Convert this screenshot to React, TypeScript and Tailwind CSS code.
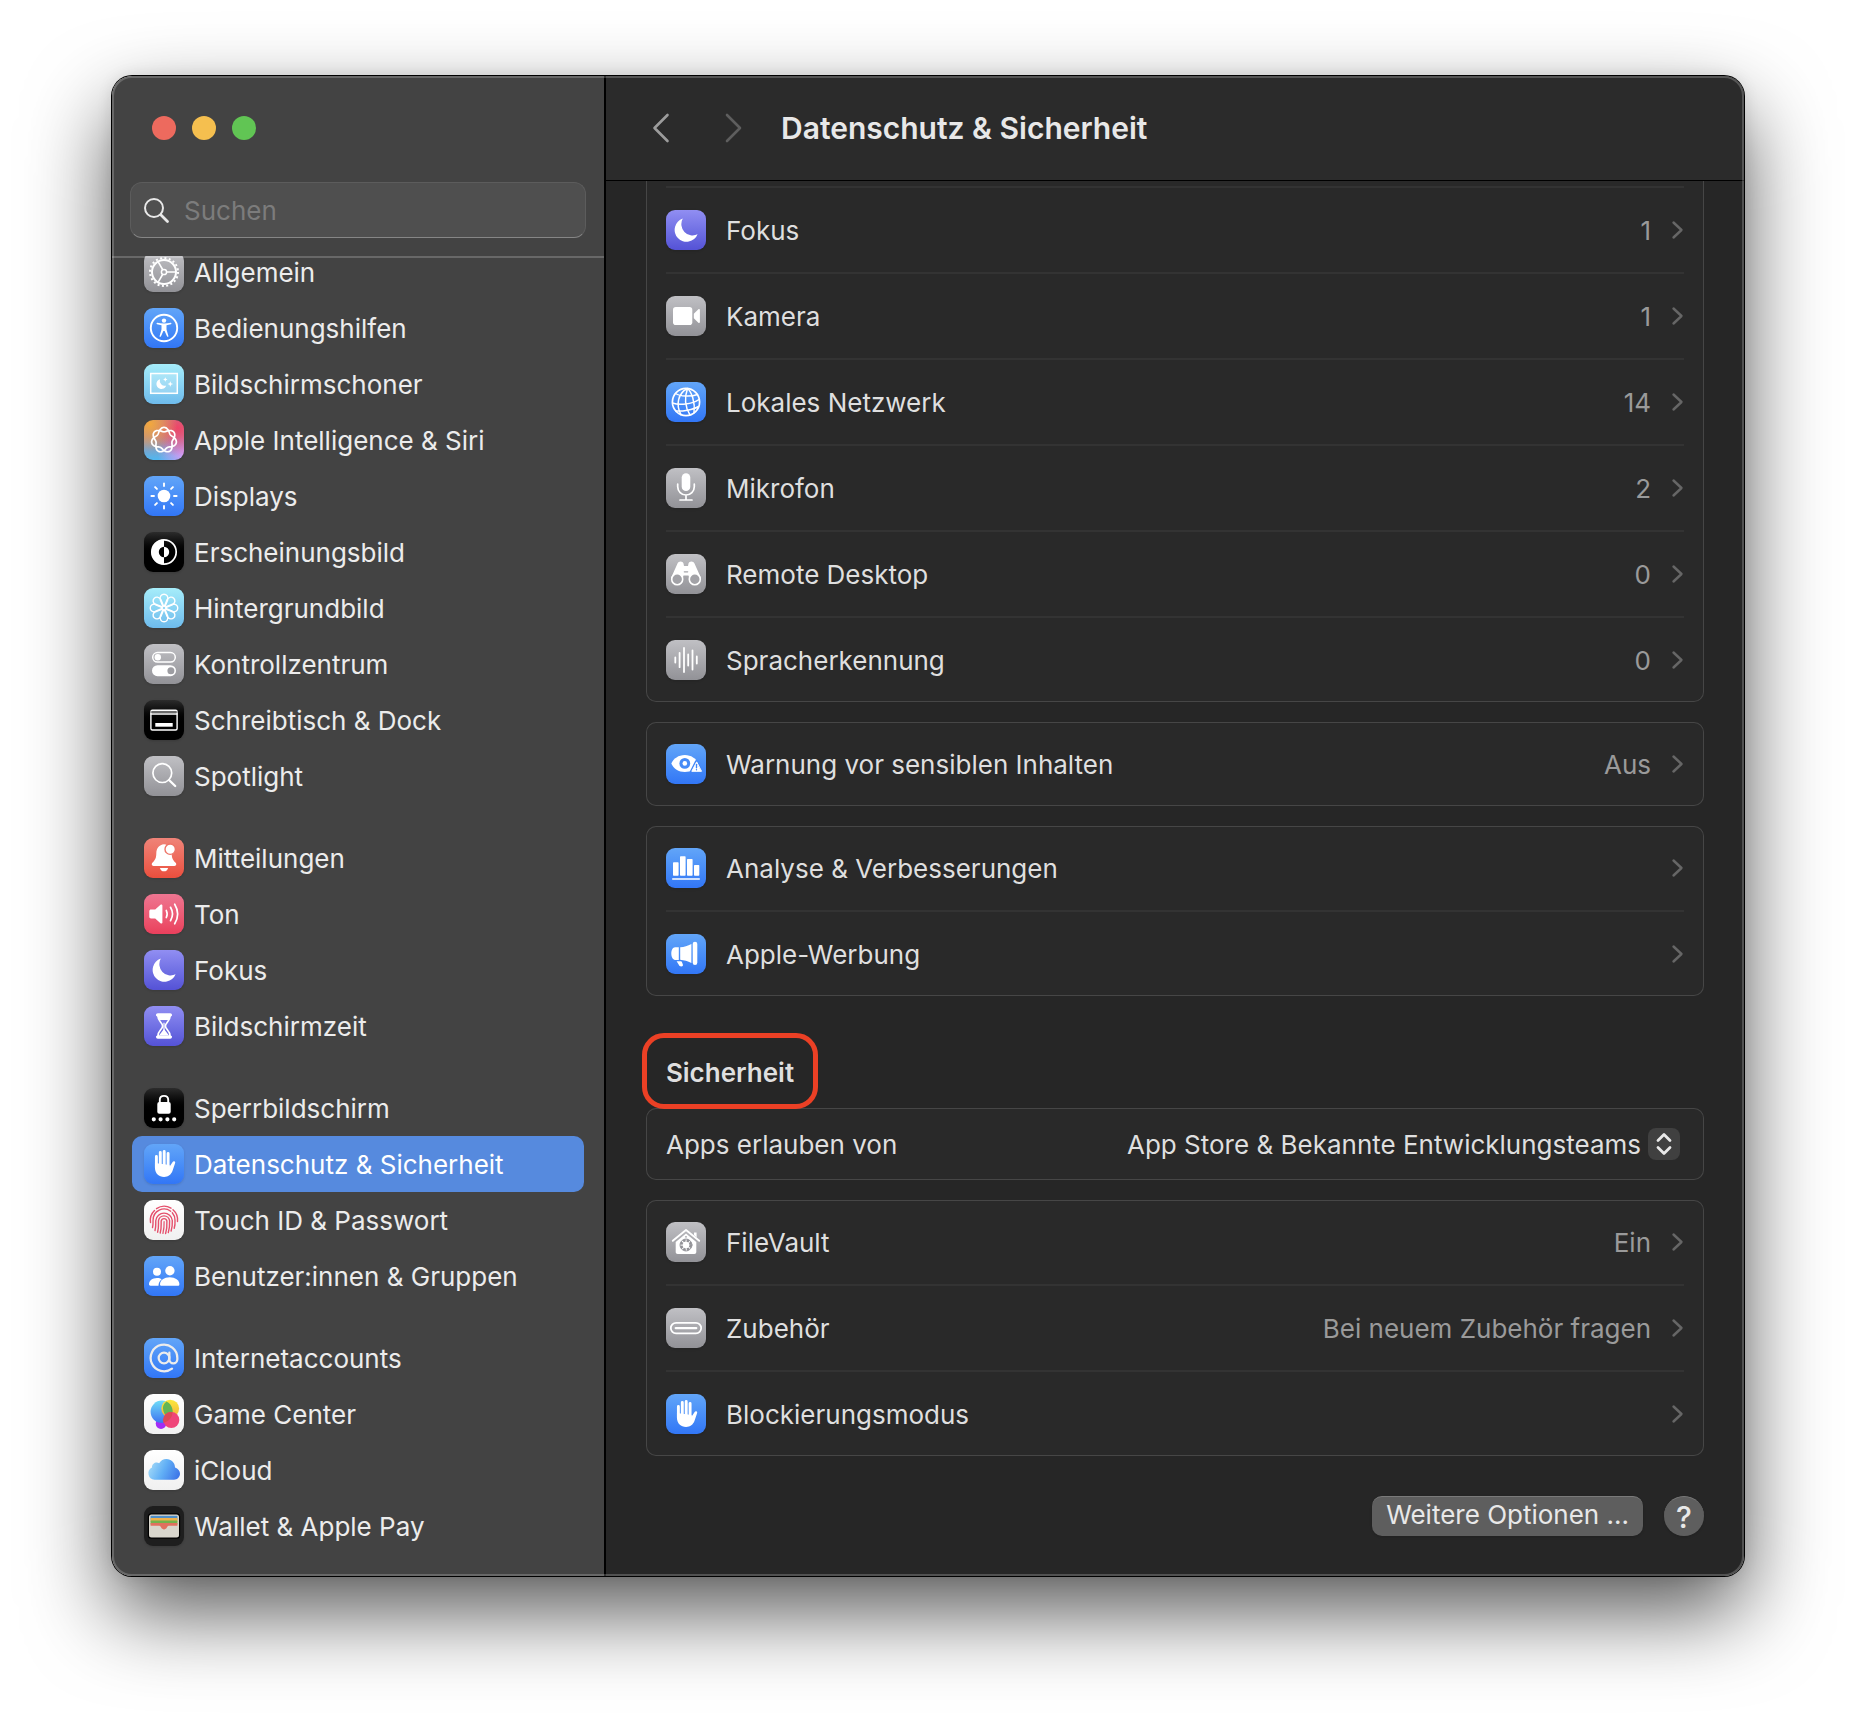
import React, { useState } from 'react';
import { AtSign } from 'lucide-react';

type Tone = 'gray' | 'blue' | 'cyan' | 'siri' | 'black' | 'red' | 'pink' | 'purple' | 'white' | 'wallet';

interface IEntry {
    label: string;
    tone: Tone;
    icon: React.ReactNode;
    value?: string;
}

const tones: Record<Tone, string> = {
    gray: 'bg-linear-to-b from-[#c0c0c4] to-[#929297]',
    blue: 'bg-linear-to-b from-[#62a5f8] to-[#3276f6]',
    cyan: 'bg-linear-to-b from-[#a6edfa] to-[#6ebbec]',
    siri: 'bg-[radial-gradient(circle_at_15%_10%,#f3a73c_0%,transparent_55%),radial-gradient(circle_at_85%_20%,#ef4468_0%,transparent_60%),radial-gradient(circle_at_100%_85%,#d79bf7_0%,transparent_50%),linear-gradient(#b08a9a_40%,#4fb8f2)]',
    black: 'bg-linear-to-b from-[#2c2c2c] to-black to-60%',
    red: 'bg-linear-to-b from-[#ef8378] to-[#eb4e3d]',
    pink: 'bg-linear-to-b from-[#ee7591] to-[#ea3f5c]',
    purple: 'bg-linear-to-b from-[#918ef2] to-[#5552d6]',
    white: 'bg-linear-to-b from-white to-[#f0f0f0]',
    wallet: 'bg-[#1e1e1e]',
};

// Closed seven-lobed knot, two turns around the centre
const knot = Array.from({ length: 169 }, (_, i) => {
    const a = (i / 168) * Math.PI * 4;
    const r = 10.4 + 2.2 * Math.cos(3.5 * a);
    return `${i ? 'L' : 'M'}${(20 + r * Math.sin(a)).toFixed(2)} ${(20 - r * Math.cos(a)).toFixed(2)}`;
}).join('');

const eighths = [0, 45, 90, 135, 180, 225, 270, 315];

const moon = <path d="M16.800 8.600A11.900 11.900 0 1 0 31.600 24.300A11.300 11.300 0 0 1 16.800 8.600z" fill="#fff" stroke="none" />;

const hand = (
    <>
        <path d="M12.400 12.500V24M16.300 8.500V22M20.200 7.500V22M24.100 9.500V24" strokeWidth="2.900" />
        <path
            d="M10.950 19V23.500c0 6 4 9.500 9.100 9.500c4.200 0 7-2.300 8.500-6.200l2.600-7.800c.5-1.600-1.700-2.400-2.500-1l-3 4.500V21z"
            fill="#fff"
            stroke="none"
        />
    </>
);

const gear = (
    <>
        <circle cx="20" cy="20" r="14" strokeWidth="2" strokeDasharray="2 2.400" strokeLinecap="butt" />
        <circle cx="20" cy="20" r="12" strokeWidth="2" />
        <circle cx="20" cy="20" r="2.600" strokeWidth="1.500" />
        <path d="M22.800 20H31.500M18.600 17.500L14.200 9.900M18.600 22.500L14.200 30.100" strokeWidth="1.600" />
    </>
);

const accessibility = (
    <>
        <circle cx="20" cy="20" r="13.200" strokeWidth="1.900" />
        <circle cx="20" cy="12.600" r="2.200" fill="#fff" stroke="none" />
        <path
            d="M13.200 14.800c-.8 0-.9 1.300-.1 1.500l4.400.9v4.300l-1.900 6.400c-.2 1 1 1.300 1.400.4L19.400 23h1.200l2.400 5.300c.4.9 1.600.6 1.400-.4l-1.900-6.400v-4.300l4.400-.9c.8-.2.7-1.500-.1-1.500-2.300.4-4.500.8-6.800.8s-4.500-.4-6.800-.8z"
            fill="#fff"
            stroke="none"
        />
    </>
);

const screensaver = (
    <>
        <rect x="6.700" y="9.500" width="26.600" height="19.800" strokeWidth="1.500" fill="#fff" fillOpacity=".2" strokeLinejoin="miter" />
        <path d="M16 15.200A5 5 0 1 0 22.200 21.500A5 5 0 0 1 16 15.200z" fill="#fff" stroke="none" />
        <path
            d="M21.300 13.300l.7 1.500 1.500.7-1.500.7-.7 1.500-.7-1.500-1.500-.7 1.500-.7zM26.300 17.200l.8 2 2 .8-2 .8-.8 2-.8-2-2-.8 2-.8z"
            fill="#fff"
            stroke="none"
        />
    </>
);

const sun = (
    <>
        <circle cx="20" cy="20" r="6.300" fill="#fff" stroke="none" />
        {eighths.map((deg) => (
            <path key={deg} d="M20 10V7.400" transform={`rotate(${deg} 20 20)`} strokeWidth="1.900" />
        ))}
    </>
);

const appearance = (
    <>
        <circle cx="20" cy="20" r="12.200" strokeWidth="1.700" />
        <path d="M20 7.500A12.500 12.500 0 0 0 20 32.500V25.200A5.200 5.200 0 0 1 20 14.800z" fill="#fff" stroke="none" />
        <path d="M20 14.800A5.200 5.200 0 0 1 20 25.200z" fill="#fff" stroke="none" />
    </>
);

const flower = (
    <>
        {eighths.map((deg) => (
            <path
                key={deg}
                d="M19 18.500L16.300 12C14.500 4.300 25.500 4.300 23.700 12L21 18.500"
                transform={`rotate(${deg} 20 20)`}
                strokeWidth="1.400"
            />
        ))}
    </>
);

const toggles = (
    <>
        <rect x="8.700" y="8.500" width="22.600" height="9.600" rx="4.800" strokeWidth="1.500" />
        <circle cx="13.800" cy="13.300" r="3.200" fill="#fff" stroke="none" />
        <rect x="8" y="21.200" width="24" height="11" rx="5.500" fill="#fff" stroke="none" />
        <circle cx="26.900" cy="26.700" r="3.500" fill="#9d9da2" stroke="none" />
    </>
);

const dock = (
    <>
        <rect x="6.900" y="10.200" width="26.200" height="19.800" rx="1.500" strokeWidth="1.400" />
        <path d="M7 12h26" stroke="#8a8a8a" strokeWidth="1.600" />
        <path d="M7 14h26" strokeWidth="1.300" />
        <rect x="11.300" y="23" width="17.400" height="3.700" fill="#fff" stroke="none" />
    </>
);

const magnifier = (
    <>
        <circle cx="18.300" cy="17.100" r="9.400" strokeWidth="1.700" />
        <path d="M25 24l6.200 6" strokeWidth="2.300" />
    </>
);

const bell = (
    <>
        <path
            d="M20 6.300c-4.800.5-7.600 4-7.700 9-.1 4-.6 6.300-3.700 9.200-1.400 1.300-1.100 3.400.9 3.400h21c2 0 2.300-2.100.9-3.400-3.100-2.900-3.600-5.200-3.700-9.200-.1-5-2.900-8.500-7.700-9z"
            fill="#fff"
            stroke="none"
        />
        <path d="M15.900 29.900h8.200c-.4 2-2 3.400-4.100 3.400s-3.700-1.400-4.100-3.400z" fill="#fff" stroke="none" />
        <circle cx="26.200" cy="11.200" r="5.200" fill="#fff" stroke="#ed7467" strokeWidth="1.400" />
    </>
);

const speaker = (
    <>
        <path d="M7 15.500h4.200l5.300-4.700c.8-.7 1.900-.2 1.900.8v16.800c0 1-1.100 1.500-1.900.8l-5.300-4.700H7c-1 0-1.700-.7-1.700-1.700v-5.600c0-1 .7-1.700 1.700-1.700z" fill="#fff" stroke="none" />
        <path d="M22.300 16.500a8 8 0 0 1 0 7M26.500 13.300a13 13 0 0 1 0 13.400M30.700 10.200a19 19 0 0 1 0 19.600" strokeWidth="1.700" />
    </>
);

const hourglass = (
    <>
        <path d="M12 9.200c0-1.200.7-1.900 1.800-1.900h12.400c1.100 0 1.800.7 1.800 1.900 0 .6-.3 1-.8 1H12.800c-.5 0-.8-.4-.8-1zM12 30.800c0 1.200.7 1.900 1.800 1.900h12.400c1.100 0 1.800-.7 1.800-1.900 0-.6-.3-1-.8-1H12.800c-.5 0-.8.4-.8 1z" fill="#fff" stroke="none" />
        <path d="M13.900 10c0 5.500 4.700 6.500 4.700 10s-4.700 4.500-4.700 10h12.200c0-5.500-4.700-6.500-4.700-10s4.700-4.500 4.700-10z" strokeWidth="1.700" />
        <path d="M14 10h12c0 1.500-.5 2.800-1.300 4h-9.400c-.8-1.200-1.300-2.500-1.300-4zM20 23l4.600 6h-9.200z" fill="#fff" stroke="none" />
        <path d="M20 17v8" strokeWidth="1.200" />
    </>
);

const lock = (
    <>
        <rect x="13.300" y="14" width="13.400" height="11.700" rx="2" fill="#fff" stroke="none" />
        <path d="M15.800 15v-3.200c0-5.300 8.400-5.300 8.400 0V15" strokeWidth="1.900" />
        <path d="M9.800 31.300h0M16.600 31.300h0M23.400 31.300h0M30.200 31.300h0" strokeWidth="4.200" />
    </>
);

const fingerprint = (
    <g stroke="#e5506c" strokeWidth="1.400">
        <path d="M6.500 22.500A13.500 13.500 0 0 1 10.500 10.500M12.500 8.700A13.600 13.600 0 0 1 27 8.200M29 9.800A13.600 13.600 0 0 1 33.500 21.500" />
        <path d="M8.500 27.500c.8-3 .4-5 .6-7.500a11 11 0 0 1 17.600-8.800M28.300 12.800a11 11 0 0 1 2.700 7.500c.2 3 0 5.500-.8 8" />
        <path d="M11 30.500c1.200-4 .6-7 .8-10a8.300 8.300 0 0 1 16.500 0c.2 4-.1 7-1.200 10.500" />
        <path d="M13.600 32.200c1.400-4.700.7-8 .9-11.500a5.600 5.600 0 0 1 11.100 0c.2 4.500-.1 8-1.300 11.800" />
        <path d="M16.200 33c1.500-5 .8-8.500 1-12a2.900 2.900 0 0 1 5.700 0c.2 4.500-.1 8.500-1.300 12.500" />
        <path d="M20.100 21.500c.2 4.500-.2 8-1.200 12" strokeWidth="1.200" />
    </g>
);

const people = (
    <>
        <circle cx="13" cy="15.700" r="4" fill="#fff" stroke="none" />
        <path d="M5 28.300c0-3.500 3.300-6.300 8-6.300 2 0 3.500.5 4.700 1.200-1.900 1.500-3.200 3.500-3.200 6.500H6.500c-1 0-1.500-.5-1.500-1.400z" fill="#fff" stroke="none" />
        <circle cx="25.900" cy="14.700" r="4.700" fill="#fff" stroke="none" />
        <path d="M16 28.200c0-3.700 4.200-6.900 9.700-6.900s9.700 3.200 9.700 6.900c0 1-.6 1.500-1.700 1.500h-16c-1.100 0-1.700-.5-1.700-1.500z" fill="#fff" stroke="none" />
    </>
);

const gameCenter = (
    <>
        <defs>
            <linearGradient id="gc-blue" x1="0" y1="0" x2="0" y2="1">
                <stop offset="0" stopColor="#6fdcf8" />
                <stop offset="1" stopColor="#3f74f0" />
            </linearGradient>
            <linearGradient id="gc-yellow" x1="0" y1="0" x2="0" y2="1">
                <stop offset="0" stopColor="#fbe93c" />
                <stop offset="1" stopColor="#f2b13a" />
            </linearGradient>
        </defs>
        <g stroke="none">
            <circle cx="17" cy="29.600" r="5.300" fill="#a32cf5" />
            <circle cx="17.800" cy="17.800" r="11.200" fill="url(#gc-blue)" />
            <circle cx="26.200" cy="14.600" r="8.900" fill="url(#gc-yellow)" />
            <path d="M22.500 7.600A11.200 11.200 0 0 1 27 23.500A8.900 8.900 0 0 1 22.500 7.600z" fill="#62b556" />
            <circle cx="27.300" cy="26" r="8" fill="#ef4579" />
            <path d="M20 22.500A8 8 0 0 1 28.600 18.100A11.200 11.200 0 0 1 19.600 28.900A8 8 0 0 1 20 22.500z" fill="#dc4a55" />
        </g>
    </>
);

const cloud = (
    <>
        <defs>
            <linearGradient id="cloud" x1="0" y1=".3" x2="1" y2=".6">
                <stop offset="0" stopColor="#a5dbf7" />
                <stop offset=".5" stopColor="#62b0f6" />
                <stop offset="1" stopColor="#3f78e8" />
            </linearGradient>
        </defs>
        <path
            d="M10.500 29.700A6.500 6.500 0 0 1 8 17.400C7.700 13.700 12.300 11.200 15.100 13.300C16.800 10.500 19.300 9 22.300 9C27.300 9 31 12.700 31 17.400C34 18.300 36 20.800 36 23.800C36 27.200 33.300 29.700 30 29.700z"
            fill="url(#cloud)"
            stroke="none"
        />
    </>
);

const wallet = (
    <g stroke="none">
        <rect x="3.800" y="7.200" width="32.400" height="25.600" rx="3.500" fill="#000" />
        <rect x="5" y="8.400" width="30" height="23.200" rx="2.500" fill="#d9d6cd" />
        <rect x="6.600" y="9.800" width="26.800" height="4" fill="#4f8fc8" />
        <rect x="6.600" y="12" width="26.800" height="4" fill="#efb04a" />
        <rect x="6.600" y="14.500" width="26.800" height="4" fill="#72b24c" />
        <path d="M6.600 17h26.800v2.800h-8.200c-1.200 0-1.700.5-2.200 1.500-1.200 2.800-4.800 2.800-6 0-.5-1-1-1.500-2.200-1.500H6.600z" fill="#e0705f" />
    </g>
);

const camera = (
    <g fill="#fff" stroke="none">
        <rect x="7" y="11" width="19.300" height="18" rx="2.800" />
        <path d="M27.800 17.800l4.600-4.500c.6-.6 1.500-.3 1.500.6v12.200c0 .9-.9 1.200-1.500.6l-4.600-4.500z" />
    </g>
);

const globe = (
    <g strokeWidth="1.500">
        <circle cx="20" cy="20" r="13.600" strokeWidth="1.700" />
        <path d="M21.500 6.500C12 11 9.500 23 15 32.600M21.500 6.500C18.500 15 19 25 24 33M21.500 6.500C25.500 10 29.500 20 28 31" />
        <path d="M9.500 11.500C14 14.500 25 15 31.500 12.500M6.500 21C13 23.500 26 22.500 33 17.500M10 29C16 29.500 27 28 32.500 24.500" />
    </g>
);

const microphone = (
    <>
        <rect x="15.700" y="5.300" width="8.600" height="17.700" rx="4.300" fill="#fff" stroke="none" />
        <path d="M11.700 16v2.700a8.300 8.300 0 0 0 16.600 0V16M20 27.500V31.500M14 32h12" strokeWidth="1.700" />
    </>
);

const binoculars = (
    <>
        <path
            d="M11.500 9.500c.8-2.800 5.500-2.800 6 0l.5 2.500h4l.5-2.500c.5-2.800 5.200-2.800 6 0L35 24l-11.500 1-1-3.500h-5l-1 3.500L5 24z"
            fill="#fff"
            stroke="none"
        />
        <path d="M18.300 17.800h3.400" stroke="#a5a5aa" strokeWidth="1.200" />
        <circle cx="11.200" cy="25.300" r="5.500" fill="#a2a2a7" strokeWidth="1.600" />
        <circle cx="28.800" cy="25.300" r="5.500" fill="#a2a2a7" strokeWidth="1.600" />
    </>
);

const waveform = <path d="M9.300 17.500v5M13.600 12.800v14.400M18 8v24M22.200 14.500v11M26.500 10.500v19M30.800 16.500v7" strokeWidth="1.800" />;

const eyeWarning = (
    <>
        <path d="M5.300 19.500C7.500 14.500 12.500 11 18.800 11s11.300 3.500 13.500 8.500C30 24.500 25 28 18.800 28S7.500 24.500 5.300 19.500z" fill="#fff" stroke="none" />
        <circle cx="18.800" cy="19.400" r="5.400" fill="#458bf7" stroke="none" />
        <circle cx="18.800" cy="19.400" r="2.300" fill="#fff" stroke="none" />
        <path d="M30.500 17.500L25.500 27.500H35.500z" fill="#fff" stroke="#4085f7" strokeWidth="3" />
        <path d="M30.500 18.200L25.800 27.300H35.200z" fill="#fff" strokeWidth="1" />
        <path d="M30.500 20.500v3.200M30.500 25.700h0" stroke="#4085f7" strokeWidth="1.400" />
    </>
);

const chart = (
    <g fill="#fff" stroke="none">
        <rect x="7" y="14.300" width="5.600" height="13.400" rx=".7" />
        <rect x="14" y="8.300" width="5.600" height="19.400" rx=".7" />
        <rect x="21" y="11" width="5.600" height="16.700" rx=".7" />
        <rect x="28" y="17" width="5.300" height="10.700" rx=".7" />
        <rect x="6" y="30.200" width="28" height="1.500" rx=".7" />
    </g>
);

const megaphone = (
    <g fill="#fff" stroke="none">
        <path d="M12.800 13.300v12.600H9c-2.100 0-3.700-2.800-3.700-6.300s1.600-6.300 3.700-6.300z" />
        <path d="M14.200 13.300c4-.3 7.500-1.400 11.200-3.300v19c-3.700-1.900-7.200-3-11.200-3.300z" />
        <rect x="26.700" y="7.700" width="4.600" height="23.300" rx="2.300" />
        <path d="M10.600 27.300h4.300c.5 0 .8.200 1 .7l.9 2.200c.5 1.300-.3 2.300-1.600 2.300-1.200 0-2-.6-2.400-1.700z" />
    </g>
);

const vault = (
    <>
        <path d="M28 10.500h2.600v5L28 13z" fill="#fff" stroke="none" />
        <path d="M6.800 18.800L20 8l13.200 10.800" strokeWidth="1.900" />
        <path d="M20 11.500l10.300 8.500v10c0 1.300-.8 2-2 2H11.700c-1.200 0-2-.7-2-2V20z" fill="#fff" stroke="none" />
        <circle cx="20" cy="23" r="4.700" stroke="#929297" strokeWidth="2.600" strokeDasharray="2.700 1" strokeLinecap="butt" />
        <circle cx="20" cy="23" r="6" stroke="#929297" strokeWidth=".9" />
        <path d="M20 14.800h0" stroke="#a5a5aa" strokeWidth="1.800" />
    </>
);

const port = (
    <>
        <rect x="4.800" y="14.800" width="30.400" height="10.600" rx="5.300" strokeWidth="1.800" />
        <path d="M9.800 20.100h20.400" strokeWidth="2.400" />
    </>
);

const sidebarGroups: IEntry[][] = [
    [
        { label: 'Allgemein', tone: 'gray', icon: gear },
        { label: 'Bedienungshilfen', tone: 'blue', icon: accessibility },
        { label: 'Bildschirmschoner', tone: 'cyan', icon: screensaver },
        { label: 'Apple Intelligence & Siri', tone: 'siri', icon: <path d={knot} strokeWidth="1.700" /> },
        { label: 'Displays', tone: 'blue', icon: sun },
        { label: 'Erscheinungsbild', tone: 'black', icon: appearance },
        { label: 'Hintergrundbild', tone: 'cyan', icon: flower },
        { label: 'Kontrollzentrum', tone: 'gray', icon: toggles },
        { label: 'Schreibtisch & Dock', tone: 'black', icon: dock },
        { label: 'Spotlight', tone: 'gray', icon: magnifier },
    ],
    [
        { label: 'Mitteilungen', tone: 'red', icon: bell },
        { label: 'Ton', tone: 'pink', icon: speaker },
        { label: 'Fokus', tone: 'purple', icon: moon },
        { label: 'Bildschirmzeit', tone: 'purple', icon: hourglass },
    ],
    [
        { label: 'Sperrbildschirm', tone: 'black', icon: lock },
        { label: 'Datenschutz & Sicherheit', tone: 'blue', icon: hand },
        { label: 'Touch ID & Passwort', tone: 'white', icon: fingerprint },
        { label: 'Benutzer:innen & Gruppen', tone: 'blue', icon: people },
    ],
    [
        { label: 'Internetaccounts', tone: 'blue', icon: <AtSign x={4} y={4} width={32} height={32} strokeWidth={1.7} /> },
        { label: 'Game Center', tone: 'white', icon: gameCenter },
        { label: 'iCloud', tone: 'white', icon: cloud },
        { label: 'Wallet & Apple Pay', tone: 'wallet', icon: wallet },
    ],
];

const permissions: IEntry[] = [
    { label: 'Fokus', tone: 'purple', icon: moon, value: '1' },
    { label: 'Kamera', tone: 'gray', icon: camera, value: '1' },
    { label: 'Lokales Netzwerk', tone: 'blue', icon: globe, value: '14' },
    { label: 'Mikrofon', tone: 'gray', icon: microphone, value: '2' },
    { label: 'Remote Desktop', tone: 'gray', icon: binoculars, value: '0' },
    { label: 'Spracherkennung', tone: 'gray', icon: waveform, value: '0' },
];

const warnings: IEntry[] = [{ label: 'Warnung vor sensiblen Inhalten', tone: 'blue', icon: eyeWarning, value: 'Aus' }];

const analytics: IEntry[] = [
    { label: 'Analyse & Verbesserungen', tone: 'blue', icon: chart },
    { label: 'Apple-Werbung', tone: 'blue', icon: megaphone },
];

const security: IEntry[] = [
    { label: 'FileVault', tone: 'gray', icon: vault, value: 'Ein' },
    { label: 'Zubehör', tone: 'gray', icon: port, value: 'Bei neuem Zubehör fragen' },
    { label: 'Blockierungsmodus', tone: 'blue', icon: hand },
];

const AppIcon = ({ tone, children }: { tone: Tone; children: React.ReactNode }) => (
    <span className={`size-10 shrink-0 overflow-hidden rounded-[9px] shadow-sm ${tones[tone]}`}>
        <svg viewBox="0 0 40 40" className="size-10" fill="none" stroke="#fff" strokeLinecap="round" strokeLinejoin="round" aria-hidden="true">
            {children}
        </svg>
    </span>
);

const Rows = ({ entries, className }: { entries: IEntry[]; className: string }) => (
    <ul className={`px-5 ${className}`}>
        {entries.map((entry, i) => (
            <li key={entry.label} className={i > 0 ? 'border-t-2 border-[#333]' : ''}>
                <button type="button" className="flex h-21 w-full items-center gap-5 text-left">
                    <AppIcon tone={entry.tone}>{entry.icon}</AppIcon>
                    <span className="flex-1 pt-0.5">{entry.label}</span>
                    <span className="pt-0.5 text-[#9a9a9a]">{entry.value}</span>
                    <svg viewBox="0 0 13 20" className="h-5 w-[13px]" fill="none" stroke="#666" strokeWidth="2.400" strokeLinecap="round" strokeLinejoin="round" aria-hidden="true">
                        <path d="M2.500 2.500l8 7.500-8 7.500" />
                    </svg>
                </button>
            </li>
        ))}
    </ul>
);

const Sidebar = () => {
    const [selected, setSelected] = useState('Datenschutz & Sicherheit');
    const [query, setQuery] = useState('');

    return (
        <aside className="w-[494px] shrink-0 border-r-2 border-black bg-[#434343] text-[#ececec]">
            <div className="flex gap-4 pt-10 pl-10">
                <button type="button" aria-label="Schließen" className="size-6 rounded-full bg-[#ed6a5e]" />
                <button type="button" aria-label="Minimieren" className="size-6 rounded-full bg-[#f5bf4f]" />
                <button type="button" aria-label="Vergrößern" className="size-6 rounded-full bg-[#61c554]" />
            </div>
            <label className="mx-[18px] mt-[42px] mb-[18px] flex h-14 items-center gap-3 rounded-xl border border-[#5c5c5c] border-b-[#868686] bg-[#4f4f4f] px-[13px]">
                <svg viewBox="0 0 28 28" className="size-7 shrink-0" fill="none" stroke="#e8e8e8" strokeLinecap="round" aria-hidden="true">
                    <circle cx="10" cy="12" r="9" strokeWidth="2" />
                    <path d="M17 19l6.500 6.500" strokeWidth="2.800" />
                </svg>
                <input
                    type="text"
                    aria-label="Suchen"
                    placeholder="Suchen"
                    value={query}
                    onChange={(e) => setQuery(e.target.value)}
                    className="w-full bg-transparent pt-0.5 outline-none placeholder:text-[#7c7c7c]"
                />
            </label>
            <nav className="relative overflow-hidden pb-[22px]">
                <div className="absolute inset-x-0 top-0 z-10 h-0.5 bg-white/20" />
                <div className="-mt-3 flex flex-col gap-[26px] px-5">
                    {sidebarGroups.map((group) => (
                        <ul key={group[0].label}>
                            {group.map((entry) => (
                                <li key={entry.label}>
                                    <a
                                        href="#"
                                        onClick={() => setSelected(entry.label)}
                                        className={`flex h-14 items-center gap-[10px] rounded-[10px] px-3 ${
                                            entry.label === selected ? 'bg-[#568ade] text-white' : ''
                                        }`}
                                    >
                                        <AppIcon tone={entry.tone}>{entry.icon}</AppIcon>
                                        <span className="pt-0.5">{entry.label}</span>
                                    </a>
                                </li>
                            ))}
                        </ul>
                    ))}
                </div>
            </nav>
        </aside>
    );
};

const App = () => {
    const [source, setSource] = useState('known');

    return (
        <div className="min-h-screen bg-white px-28 pt-[76px] pb-[148px] font-['Inter',sans-serif] text-[26px] leading-8">
            <div className="relative flex overflow-hidden rounded-[20px] shadow-[0_0_0_1px_#000,0_0_16px_rgba(0,0,0,0.1),0_36px_84px_rgba(0,0,0,0.66)]">
                <Sidebar />
                <main className="min-w-0 flex-1 bg-[#262626] text-[#dfdfdf]">
                    <header className="flex h-[105px] items-center border-b border-black bg-[#2b2b2b] pl-[19px]">
                        <button type="button" aria-label="Zurück" className="flex h-14 w-18 items-center justify-center">
                            <svg viewBox="0 0 18 30" className="h-[30px] w-[18px]" fill="none" stroke="#9c9c9c" strokeWidth="2.600" strokeLinecap="round" strokeLinejoin="round">
                                <path d="M15.500 2L2.500 15l13 13" />
                            </svg>
                        </button>
                        <button type="button" aria-label="Vorwärts" className="flex h-14 w-18 items-center justify-center">
                            <svg viewBox="0 0 18 30" className="h-[30px] w-[18px]" fill="none" stroke="#5e5e5e" strokeWidth="2.600" strokeLinecap="round" strokeLinejoin="round">
                                <path d="M3 2l13 13-13 13" />
                            </svg>
                        </button>
                        <h1 className="ml-3 text-[30px] font-semibold text-[#e8e8e8]">Datenschutz & Sicherheit</h1>
                    </header>

                    <div className="flex flex-col px-10 pb-10">
                        <div className="rounded-b-[10px] border border-t-0 border-[#464646] bg-[#292929] pt-[5px]">
                            <div className="mx-[19px] h-0.5 bg-[#333]" />
                            <Rows entries={permissions} className="-mx-px -mb-px" />
                        </div>
                        <Rows entries={warnings} className="mt-5 rounded-[10px] bg-[#292929] inset-ring inset-ring-[#464646]" />
                        <Rows entries={analytics} className="mt-5 rounded-[10px] bg-[#292929] inset-ring inset-ring-[#464646]" />

                        <h2 className="z-10 mt-[37px] -mb-px -ml-1 flex h-19 w-44 items-center justify-center rounded-[22px] border-5 border-[#eb4025] pt-1 font-semibold">
                            Sicherheit
                        </h2>

                        <div className="flex h-18 items-center justify-between rounded-[10px] bg-[#292929] pr-6 pl-5 inset-ring inset-ring-[#464646]">
                            <label htmlFor="source" className="pt-0.5">
                                Apps erlauben von
                            </label>
                            <div className="relative flex items-center">
                                <select
                                    id="source"
                                    value={source}
                                    onChange={(e) => setSource(e.target.value)}
                                    className="appearance-none bg-transparent pt-0.5 pr-[38px] outline-none"
                                >
                                    <option value="known">App Store & Bekannte Entwicklungsteams</option>
                                    <option value="store">App Store</option>
                                </select>
                                <span className="pointer-events-none absolute right-0 flex size-8 items-center justify-center rounded-lg bg-[#404040]">
                                    <svg viewBox="0 0 32 32" className="size-8" fill="none" stroke="#e8e8e8" strokeWidth="2.800" strokeLinecap="round" strokeLinejoin="round" aria-hidden="true">
                                        <path d="M10 12.500l6-6 6 6M10 19.500l6 6 6-6" />
                                    </svg>
                                </span>
                            </div>
                        </div>
                        <Rows entries={security} className="mt-5 rounded-[10px] bg-[#292929] inset-ring inset-ring-[#464646]" />

                        <div className="mt-10 flex justify-end gap-[21px]">
                            <button
                                type="button"
                                className="h-10 rounded-[10px] border-t border-[#7a7a7a] bg-[#5e5e5e] px-[14px] pb-1 text-[#e8e8e8] shadow-sm"
                            >
                                Weitere Optionen ...
                            </button>
                            <button
                                type="button"
                                aria-label="Hilfe"
                                className="flex size-10 items-center justify-center rounded-full border-t border-[#7a7a7a] bg-[#5e5e5e] text-[30px] font-medium text-[#e8e8e8] shadow-sm"
                            >
                                ?
                            </button>
                        </div>
                    </div>
                </main>
                <div className="pointer-events-none absolute inset-0 z-20 rounded-[20px] border-2 border-white/20" />
            </div>
        </div>
    );
};

export default App;
